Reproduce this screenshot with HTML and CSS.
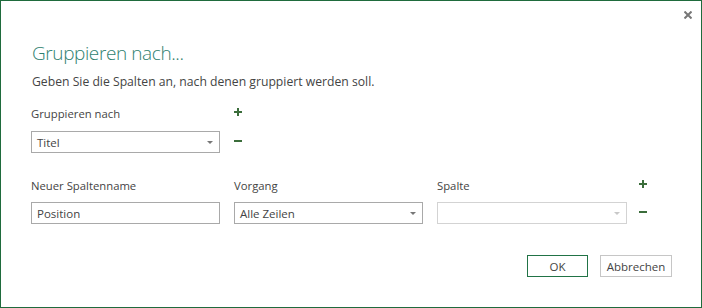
FILE: index.html
```html
<!DOCTYPE html>
<html lang="de">
<head>
<meta charset="utf-8">
<title>Gruppieren nach</title>
<link rel="stylesheet" href="styles.css">
</head>
<body>
<div class="dialog">
  <div class="topbar">
    <button class="close" aria-label="Schließen">
      <svg width="8" height="8" viewBox="0 0 8 8"><path d="M0.5 0.5 L7.5 7.5 M7.5 0.5 L0.5 7.5" stroke="#777" stroke-width="2"/></svg>
    </button>
  </div>
  <h1 class="title">Gruppieren nach...</h1>
  <p class="subtitle">Geben Sie die Spalten an, nach denen gruppiert werden soll.</p>

  <div class="grid group-a">
    <div class="label">Gruppieren nach</div>
    <div class="icon plus"><svg width="8" height="8" viewBox="0 0 8 8"><rect x="3" y="0" width="2" height="8"/><rect x="0" y="3" width="8" height="2"/></svg></div>
    <div class="field select"><span class="value">Titel</span><svg class="arrow" width="6" height="3" viewBox="0 0 6 3"><polygon points="0,0 6,0 3,3"/></svg></div>
    <div class="icon minus"><svg width="8" height="2" viewBox="0 0 8 2"><rect x="0" y="0" width="8" height="2"/></svg></div>
  </div>

  <div class="grid group-b">
    <div class="label">Neuer Spaltenname</div>
    <div class="label">Vorgang</div>
    <div class="label">Spalte</div>
    <div class="icon plus"><svg width="8" height="8" viewBox="0 0 8 8"><rect x="3" y="0" width="2" height="8"/><rect x="0" y="3" width="8" height="2"/></svg></div>
    <div class="field"><span class="value">Position</span></div>
    <div class="field select"><span class="value">Alle Zeilen</span><svg class="arrow" width="6" height="3" viewBox="0 0 6 3"><polygon points="0,0 6,0 3,3"/></svg></div>
    <div class="field select disabled"><span class="value"></span><svg class="arrow" width="6" height="3" viewBox="0 0 6 3"><polygon points="0,0 6,0 3,3"/></svg></div>
    <div class="icon minus"><svg width="8" height="2" viewBox="0 0 8 2"><rect x="0" y="0" width="8" height="2"/></svg></div>
  </div>

  <div class="actions">
    <button class="btn primary">OK</button>
    <button class="btn">Abbrechen</button>
  </div>
</div>
</body>
</html>
```
FILE: styles.css
```css
* { box-sizing: border-box; }
html, body { margin: 0; padding: 0; background: #fff; }
body { font-family: "Open Sans", "Noto Sans", sans-serif; color: #444; }

.dialog {
  width: 702px;
  height: 308px;
  border: 1px solid #1f6b3d;
  background: #fff;
  padding: 0 0 0 30px;
}

.topbar {
  height: 38px;
  display: flex;
  justify-content: flex-end;
  align-items: flex-start;
  padding: 10px 9px 0 0;
}
.close {
  border: 0;
  background: none;
  padding: 0;
  width: 8px;
  height: 8px;
  display: block;
}
.close svg { display: block; }

.title {
  margin: 0 0 0 1px;
  font-weight: 300;
  font-size: 19px;
  letter-spacing: -0.4px;
  line-height: 28px;
  color: #2f7f6f;
}
.subtitle {
  margin: 6px 0 0 1px;
  font-size: 12.2px;
  line-height: 18px;
  color: #444;
}

.grid { display: grid; column-gap: 14px; align-items: center; }
.group-a {
  margin-top: 15px;
  grid-template-columns: 189px 8px;
  grid-template-rows: 16px 22px;
  row-gap: 9px;
}
.group-b {
  margin-top: 25px;
  grid-template-columns: 189px 189px 190px 8px;
  grid-template-rows: 16px 22px;
  row-gap: 8px;
}
.group-b .icon { margin-left: -2px; }

.label {
  font-size: 11.3px;
  line-height: 16px;
  color: #444;
}
.icon svg { display: block; fill: #3b6d3b; }
.plus { align-self: start; margin-top: 2px; }
.minus { margin-top: -3px; }

.field {
  height: 22px;
  border: 1px solid #a9a9a9;
  display: flex;
  align-items: center;
  padding: 0 6px 0 5px;
  font-size: 11.5px;
  color: #444;
}
.value { flex: 1; }
.arrow { fill: #777; display: block; margin-top: 1px; }
.disabled { border-color: #d3d3d3; }
.disabled .arrow { fill: #c8c8c8; }

.actions {
  display: flex;
  justify-content: flex-end;
  gap: 12px;
  margin-top: 31px;
  padding-right: 29px;
}
.btn {
  height: 22px;
  width: 72px;
  border: 1px solid #c6c6c6;
  background: #fff;
  font-family: inherit;
  font-size: 11.5px;
  color: #444;
  padding: 0;
}
.btn.primary {
  width: 61px;
  border-color: #217346;
}
```
